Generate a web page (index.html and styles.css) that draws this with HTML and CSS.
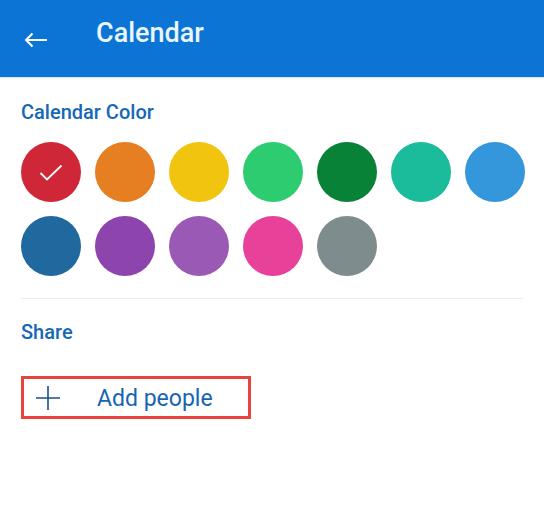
FILE: index.html
```html
<!DOCTYPE html>
<html>
<head>
<meta charset="utf-8">
<link rel="stylesheet" href="styles.css">
</head>
<body>
<header class="topbar">
  <svg class="back" width="24" height="16" viewBox="0 0 24 16"><path d="M23 8H2M8.5 1.5L2 8l6.5 6.5" fill="none" stroke="#fff" stroke-width="2"/></svg>
  <h1 class="title">Calendar</h1>
</header>
<main class="content">
  <h2 class="section-title">Calendar Color</h2>
  <div class="swatches">
    <div class="swatch selected" style="background:#cf2737">
      <svg width="24" height="17" viewBox="0 0 24 17"><path d="M1.5 9l6.5 6.5L22.5 1.5" fill="none" stroke="#fff" stroke-width="1.8"/></svg>
    </div>
    <div class="swatch" style="background:#e67e22"></div>
    <div class="swatch" style="background:#f1c40f"></div>
    <div class="swatch" style="background:#2ecc71"></div>
    <div class="swatch" style="background:#088236"></div>
    <div class="swatch" style="background:#1abc9c"></div>
    <div class="swatch" style="background:#3597db"></div>
    <div class="swatch" style="background:#1f699f"></div>
    <div class="swatch" style="background:#8e44ad"></div>
    <div class="swatch" style="background:#9b59b6"></div>
    <div class="swatch" style="background:#e8419a"></div>
    <div class="swatch" style="background:#7f8c8d"></div>
  </div>
  <hr class="divider">
  <h2 class="section-title share">Share</h2>
  <button class="add-people">
    <svg width="24" height="24" viewBox="0 0 24 24"><path d="M12 0v24M0 12h24" fill="none" stroke="#1d4f8e" stroke-width="1.6"/></svg>
    <span>Add people</span>
  </button>
</main>
</body>
</html>
```
FILE: styles.css
```css
* { box-sizing: border-box; }
body {
  margin: 0;
  background: #fff;
  font-family: Roboto, "Liberation Sans", sans-serif;
}
.topbar {
  height: 77px;
  background: #0b74d4;
  display: flex;
  align-items: flex-start;
  padding: 0 0 0 24px;
  box-shadow: 0 1px 2px rgba(0,0,0,0.15);
}
.back {
  margin-top: 32px;
  flex: none;
}
.title {
  margin: 16px 0 0 48px;
  font-size: 27px;
  font-weight: 500;
  color: #eaf6ff;
  line-height: 34px;
}
.content {
  padding: 0 21px;
}
.section-title {
  margin: 0;
  font-size: 20px;
  font-weight: 500;
  color: #1468b5;
  line-height: 24px;
  padding-top: 23px;
}
.swatches {
  display: grid;
  grid-template-columns: repeat(7, 60px);
  column-gap: 14px;
  row-gap: 14px;
  margin-top: 18px;
}
.swatch {
  width: 60px;
  height: 60px;
  border-radius: 50%;
  display: flex;
  align-items: center;
  justify-content: center;
}
.swatch svg { margin-top: 1px; }
.divider {
  border: 0;
  border-top: 1px solid #ececec;
  margin: 22px 0 0 0;
}
.share {
  padding-top: 21px;
}
.add-people {
  margin-top: 32px;
  width: 230px;
  height: 43px;
  border: 3px solid #e8433d;
  background: #fff;
  display: flex;
  align-items: center;
  padding: 2px 0 0 12px;
  font-family: inherit;
  cursor: pointer;
}
.add-people svg { margin-top: -2px; }
.add-people span {
  margin-left: 37px;
  font-size: 23px;
  color: #1665b0;
  line-height: 28px;
}
```
